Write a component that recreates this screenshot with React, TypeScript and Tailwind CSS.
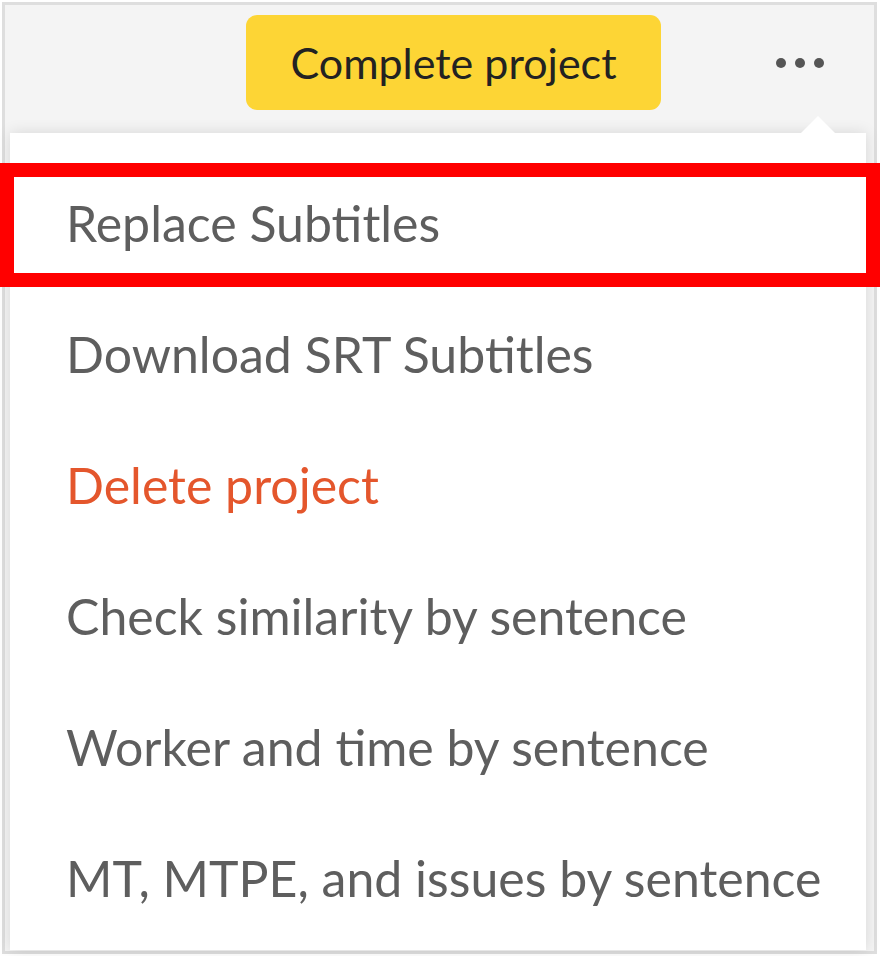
import React from 'react';

const items = [
  { label: 'Replace Subtitles', danger: false },
  { label: 'Download SRT Subtitles', danger: false },
  { label: 'Delete project', danger: true },
  { label: 'Check similarity by sentence', danger: false },
  { label: 'Worker and time by sentence', danger: false },
  { label: 'MT, MTPE, and issues by sentence', danger: false },
];

export default function App() {
  return (
    <div
      className="relative w-[880px] h-[956px] bg-white overflow-hidden"
      style={{ fontFamily: 'Lato, "Open Sans", sans-serif' }}
    >
      {/* page frame */}
      <div className="absolute left-[2px] top-[2px] w-[875px] h-[952px] border-[3px] border-[#dedede] bg-[#f4f4f4]">
        <div className="flex items-center h-[115px] pl-[241px] pr-[48px]">
          <button
            type="button"
            className="h-[95px] w-[415px] rounded-[11px] bg-[#fdd535] text-[#222] text-[43px] leading-none"
          >
            Complete project
          </button>
          <div className="ml-auto flex items-center gap-[9px] pr-[2px]">
            <span className="w-[10px] h-[10px] rounded-full bg-[#555]" />
            <span className="w-[10px] h-[10px] rounded-full bg-[#555]" />
            <span className="w-[10px] h-[10px] rounded-full bg-[#555]" />
          </div>
        </div>
      </div>

      {/* dropdown menu */}
      <div className="absolute left-[10px] top-[133px] w-[856px] h-[817px] bg-white shadow-[0_0_14px_rgba(0,0,0,0.12)] pt-[24px]">
        <div className="absolute -top-[17px] right-[30px] w-0 h-0 border-l-[18px] border-r-[18px] border-b-[18px] border-l-transparent border-r-transparent border-b-white" />
        {items.map((it) => (
          <div
            key={it.label}
            className={`h-[131px] flex items-center pl-[56px] text-[50px] leading-none ${
              it.danger ? 'text-[#e4562c]' : 'text-[#5e5e5e]'
            }`}
          >
            {it.label}
          </div>
        ))}
      </div>

      {/* highlight */}
      <div className="absolute left-0 top-[163px] w-[880px] h-[124px] border-[14px] border-[#ff0000]" />
    </div>
  );
}
